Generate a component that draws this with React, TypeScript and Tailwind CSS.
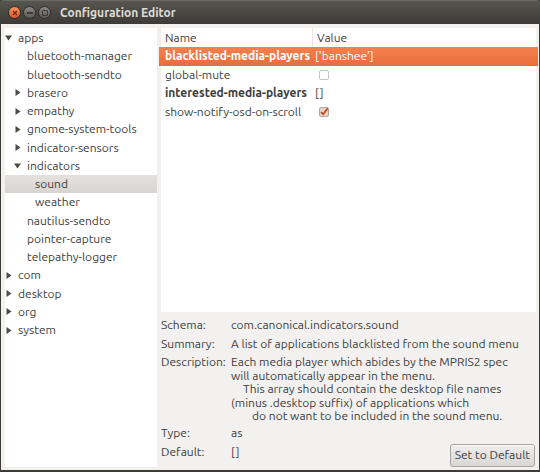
import React from 'react';

type TreeRow = {
  label: string;
  depth: number;
  expander?: 'open' | 'closed';
  selected?: boolean;
};

const TREE: TreeRow[] = [
  { label: 'apps', depth: 0, expander: 'open' },
  { label: 'bluetooth-manager', depth: 1 },
  { label: 'bluetooth-sendto', depth: 1 },
  { label: 'brasero', depth: 1, expander: 'closed' },
  { label: 'empathy', depth: 1, expander: 'closed' },
  { label: 'gnome-system-tools', depth: 1, expander: 'closed' },
  { label: 'indicator-sensors', depth: 1, expander: 'closed' },
  { label: 'indicators', depth: 1, expander: 'open' },
  { label: 'sound', depth: 2, selected: true },
  { label: 'weather', depth: 2 },
  { label: 'nautilus-sendto', depth: 1 },
  { label: 'pointer-capture', depth: 1 },
  { label: 'telepathy-logger', depth: 1 },
  { label: 'com', depth: 0, expander: 'closed' },
  { label: 'desktop', depth: 0, expander: 'closed' },
  { label: 'org', depth: 0, expander: 'closed' },
  { label: 'system', depth: 0, expander: 'closed' },
];

const INDENT = ['pl-0', 'pl-[9px]', 'pl-[17px]'];

const FONT = "font-['Ubuntu','Lato','Open_Sans',sans-serif]";

function Expander({ state }: { state?: 'open' | 'closed' }) {
  return (
    <span className="w-[7px] h-full flex items-center justify-center shrink-0">
      {state === 'open' && (
        <svg width="7" height="6" viewBox="0 0 7 6">
          <path d="M0 0.5 L7 0.5 L3.5 5.5 Z" fill="#4a4a48" />
        </svg>
      )}
      {state === 'closed' && (
        <svg width="6" height="7" viewBox="0 0 6 7">
          <path d="M0.5 0 L5.5 3.5 L0.5 7 Z" fill="#4a4a48" />
        </svg>
      )}
    </span>
  );
}

function WinButton({ kind }: { kind: 'close' | 'min' | 'max' }) {
  if (kind === 'close') {
    return (
      <span className="w-[13px] h-[13px] rounded-full bg-gradient-to-b from-[#f7915f] to-[#e0562a] border border-[#2e2d2a] flex items-center justify-center">
        <svg width="6" height="6" viewBox="0 0 6 6">
          <path d="M1 1 L5 5 M5 1 L1 5" stroke="#6b2a12" strokeWidth="1.3" />
        </svg>
      </span>
    );
  }
  return (
    <span className="w-[13px] h-[13px] rounded-full bg-gradient-to-b from-[#8a8983] to-[#5d5c57] border border-[#2e2d2a] flex items-center justify-center">
      {kind === 'min' ? (
        <span className="w-[6px] h-[2px] bg-[#3a3935]" />
      ) : (
        <span className="w-[6px] h-[6px] border border-[#3a3935] rounded-[1px]" />
      )}
    </span>
  );
}

function CheckBox({ checked }: { checked: boolean }) {
  return (
    <svg width="10" height="10" viewBox="0 0 10 10">
      <rect
        x="0.5"
        y="0.5"
        width="9"
        height="9"
        rx="1.5"
        fill={checked ? '#e9d3cb' : '#ffffff'}
        stroke={checked ? '#b8a49c' : '#c6c4c0'}
      />
      {checked && <path d="M2 5.2 L4.1 7.2 L8.8 1.4" fill="none" stroke="#c2471d" strokeWidth="1.7" />}
    </svg>
  );
}

const KEYS = [
  { name: 'blacklisted-media-players', value: "['banshee']", bold: true, selected: true },
  { name: 'global-mute', check: false },
  { name: 'interested-media-players', value: '[]', bold: true },
  { name: 'show-notify-osd-on-scroll', check: true },
];

export default function App() {
  return (
    <div className={`w-[540px] h-[472px] flex flex-col bg-[#3c3b37] text-[12px] text-[#3c3c3c] ${FONT}`}>
      <div className="h-[24px] shrink-0 flex items-center bg-gradient-to-b from-[#56554f] to-[#3c3b37] border-t border-[#6a6964] rounded-t-[4px]">
        <div className="flex items-center gap-[2px] pl-[8px]">
          <WinButton kind="close" />
          <WinButton kind="min" />
          <WinButton kind="max" />
        </div>
        <span className="ml-[9px] text-[#dfdbd2] font-bold text-[12px]">Configuration Editor</span>
      </div>

      <div className="flex-1 flex bg-[#f2f1f0] mx-[1px] mb-[2px] pt-[4px] pl-[4px] pr-[3px] pb-[3px] gap-[4px] min-h-0">
        <div className="w-[152px] shrink-0 bg-white pt-[1px] flex flex-col">
          {TREE.map((row) => (
            <div
              key={row.label}
              className={`h-[18.25px] flex items-center ${INDENT[row.depth]} ${
                row.selected ? 'bg-gradient-to-b from-[#e4e1de] to-[#d8d5d1]' : ''
              }`}
            >
              <Expander state={row.expander} />
              <span className="ml-[6px] whitespace-nowrap leading-none">{row.label}</span>
            </div>
          ))}
        </div>

        <div className="flex-1 flex flex-col min-w-0">
          <div className="h-[284px] shrink-0 bg-white flex flex-col">
            <div className="h-[19px] flex items-center">
              <span className="w-[152px] pl-[4px] h-full flex items-center border-r border-[#e8e6e3]">Name</span>
              <span className="pl-[4px]">Value</span>
            </div>
            {KEYS.map((k) => (
              <div
                key={k.name}
                className={`h-[18.5px] flex items-center mx-[-2px] ${
                  k.selected ? 'bg-gradient-to-b from-[#f3804f] to-[#ea6d3a] text-white' : ''
                }`}
              >
                <span className={`w-[152px] pl-[6px] whitespace-nowrap ${k.bold ? 'font-bold' : ''}`}>{k.name}</span>
                <span className="pl-[4px] flex items-center">
                  {k.value !== undefined ? k.value : <span className="ml-[4px] flex"><CheckBox checked={!!k.check} /></span>}
                </span>
              </div>
            ))}
          </div>

          <div className="flex-1 flex flex-col pt-[3px] text-[#3c3c3c]">
            <div className="h-[19px] flex items-center">
              <span className="w-[70px] shrink-0">Schema:</span>
              <span>com.canonical.indicators.sound</span>
            </div>
            <div className="h-[19px] flex items-center">
              <span className="w-[70px] shrink-0">Summary:</span>
              <span className="whitespace-nowrap">A list of applications blacklisted from the sound menu</span>
            </div>
            <div className="flex pt-[2px]">
              <span className="w-[70px] shrink-0 leading-[13.5px]">Description:</span>
              <div className="flex flex-col leading-[13.5px] whitespace-nowrap">
                <span>Each media player which abides by the MPRIS2 spec</span>
                <span>will automatically appear in the menu.</span>
                <span className="pl-[12px]">This array should contain the desktop file names</span>
                <span>(minus .desktop suffix) of applications which</span>
                <span className="pl-[21px]">do not want to be included in the sound menu.</span>
              </div>
            </div>
            <div className="flex items-end justify-between mt-[1px]">
              <div className="flex flex-col pb-[6px]">
                <div className="h-[19px] flex items-center">
                  <span className="w-[70px] shrink-0">Type:</span>
                  <span>as</span>
                </div>
                <div className="h-[19px] flex items-center">
                  <span className="w-[70px] shrink-0">Default:</span>
                  <span>[]</span>
                </div>
              </div>
              <button className="h-[23px] px-[4px] mr-[1px] mb-[1px] rounded-[3px] border border-[#a7a5a1] bg-gradient-to-b from-[#f0efee] to-[#d9d7d4] text-[#3c3c3c] text-[12px] shadow-[inset_0_1px_0_#ffffff]">
                Set to Default
              </button>
            </div>
          </div>
        </div>
      </div>
    </div>
  );
}
